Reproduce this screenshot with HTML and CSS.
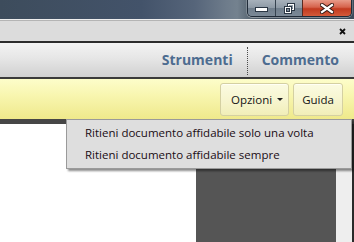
FILE: index.html
```html
<!DOCTYPE html>
<html>
<head>
<meta charset="utf-8">
<link rel="stylesheet" href="styles.css">
</head>
<body>
<div class="window">
  <div class="titlebar">
    <div class="caption">
      <div class="cb cb-min">
        <svg width="13" height="5" viewBox="0 0 13 5"><rect x="0.5" y="0.5" width="12" height="4" fill="#fff" stroke="#2a3644"/></svg>
      </div>
      <div class="cb cb-max">
        <svg width="11" height="11" viewBox="0 0 11 11">
          <rect x="3.5" y="0.5" width="7" height="7" fill="none" stroke="#2a3644"/>
          <rect x="4.5" y="1.5" width="5" height="5" fill="none" stroke="#fff"/>
          <rect x="0.5" y="3.5" width="7" height="7" fill="#7d8a97" stroke="#2a3644"/>
          <rect x="1.5" y="4.5" width="5" height="5" fill="none" stroke="#fff"/>
          <rect x="2.5" y="5.5" width="3" height="3" fill="none" stroke="#2a3644"/>
        </svg>
      </div>
      <div class="cb cb-close">
        <svg width="14" height="11" viewBox="0 0 14 11">
          <path d="M2 2 L12 9 M12 2 L2 9" stroke="#3a1a14" stroke-width="4.2" stroke-linecap="square"/>
          <path d="M2 2 L12 9 M12 2 L2 9" stroke="#fff" stroke-width="2.2" stroke-linecap="square"/>
        </svg>
      </div>
    </div>
  </div>
  <div class="tabstrip">
    <svg class="tab-close" width="7" height="7" viewBox="0 0 7 7"><path d="M1 1 L6 6 M6 1 L1 6" stroke="#111" stroke-width="1.8"/></svg>
  </div>
  <div class="toolbar">
    <span class="tb-link">Strumenti</span>
    <span class="tb-sep"></span>
    <span class="tb-link">Commento</span>
  </div>
  <div class="infobar">
    <div class="ib-btn ib-opts">Opzioni <span class="caret"></span></div>
    <div class="ib-btn ib-help">Guida</div>
  </div>
  <div class="content">
    <div class="page"></div>
    <div class="sidepanel"></div>
    <div class="scroll"></div>
    <div class="edge"></div>
  </div>
  <div class="menu">
    <div class="menu-item">Ritieni documento affidabile solo una volta</div>
    <div class="menu-item">Ritieni documento affidabile sempre</div>
  </div>
</div>
</body>
</html>
```
FILE: styles.css
```css
html, body {
  margin: 0;
  padding: 0;
}
body {
  width: 354px;
  height: 242px;
  overflow: hidden;
  font-family: "Open Sans", "Noto Sans", sans-serif;
}
.window {
  position: relative;
  width: 354px;
  height: 242px;
  display: flex;
  flex-direction: column;
}
.titlebar {
  height: 19px;
  flex: none;
  display: flex;
  justify-content: flex-end;
  align-items: flex-start;
  background-color: #425163;
  background: linear-gradient(90deg, #3d4c5c 0%, #43536a 40%, #56657a 55%, #6e7c8b 64%, #74828f 67%, #55636f 71%, #3f4d5c 76%, #3c4a59 100%);
}
.caption {
  margin-right: 2px;
  height: 17px;
  box-sizing: border-box;
  display: flex;
  border: 1px solid #202b38;
  border-top: none;
  border-radius: 0 0 5px 5px;
  overflow: hidden;
  box-shadow: 0 1px 0 rgba(255,255,255,0.35), -1px 0 0 rgba(255,255,255,0.2), 1px 0 0 rgba(255,255,255,0.2);
}
.cb {
  display: flex;
  align-items: center;
  justify-content: center;
  height: 16px;
}
.cb-min {
  width: 28px;
  background: linear-gradient(180deg, #a7b1bb 0%, #8d99a5 50%, #707e8c 51%, #7b8997 100%);
  border-right: 1px solid #36424f;
  padding-top: 2px;
  box-sizing: border-box;
}
.cb-max {
  width: 27px;
  background: linear-gradient(180deg, #a7b1bb 0%, #8d99a5 50%, #707e8c 51%, #7b8997 100%);
  border-right: 1px solid #5a2a20;
  box-sizing: border-box;
}
.cb-close {
  width: 48px;
  background: linear-gradient(180deg, #e89a88 0%, #d6634c 45%, #c23a1f 55%, #d35a3a 100%);
}
.tabstrip {
  height: 22px;
  flex: none;
  box-sizing: border-box;
  border-top: 1px solid #eeeeee;
  box-shadow: inset 0 1px 0 #b4b4b4;
  background: #dcdcdc;
  display: flex;
  justify-content: flex-end;
  align-items: center;
  padding: 1px 8px 0 0;
}
.tab-close {
  display: block;
}
.toolbar {
  height: 38px;
  flex: none;
  box-sizing: border-box;
  border-top: 2px solid #2c2c2c;
  border-bottom: 2px solid #3a3a3a;
  background: linear-gradient(180deg, #f3f3f3 0%, #e6e6e6 45%, #d0d0d0 100%);
  display: flex;
  justify-content: flex-end;
  align-items: center;
  gap: 14px;
  padding-right: 15px;
}
.tb-link {
  font-weight: 700;
  font-size: 14px;
  color: #4d6c90;
  padding-bottom: 2px;
}
.tb-sep {
  align-self: stretch;
  margin: 4px 0 2px;
  border-left: 1px dotted #4a4a4a;
}
.infobar {
  height: 40px;
  flex: none;
  box-sizing: border-box;
  background: linear-gradient(180deg, #fdfdca 0%, #f8f6b0 40%, #efe98b 100%);
  display: flex;
  justify-content: flex-end;
  align-items: flex-start;
  gap: 4px;
  padding: 4px 11px 0 0;
}
.ib-btn {
  height: 33px;
  box-sizing: border-box;
  border: 1px solid #d4d0a2;
  border-radius: 3px;
  box-shadow: inset 0 1px 0 #fffff4;
  background: linear-gradient(180deg, #fbfbe2 0%, #f6f4cc 60%, #f1eeb8 100%);
  display: flex;
  align-items: center;
  font-size: 11.5px;
  color: #141414;
  padding-bottom: 1px;
}
.ib-opts {
  width: 69px;
  padding-left: 10px;
}
.ib-help {
  width: 50px;
  justify-content: center;
}
.caret {
  width: 0;
  height: 0;
  border-left: 3px solid transparent;
  border-right: 3px solid transparent;
  border-top: 3px solid #222;
  margin-left: 5px;
  margin-top: 1px;
}
.content {
  flex: 1;
  display: flex;
  border-top: 5px solid #464646;
}
.page {
  width: 196px;
  background: #ffffff;
}
.sidepanel {
  width: 140px;
  background: #555555;
}
.scroll {
  width: 16px;
  background: #eeeeee;
}
.edge {
  width: 2px;
  background: #2a2a2a;
}
.menu {
  position: absolute;
  left: 66px;
  top: 119px;
  width: 286px;
  box-sizing: border-box;
  border: 1px solid #9a9a9a;
  background: #dedede;
  padding: 2px 0 2px;
  box-shadow: 2px 2px 2px rgba(0,0,0,0.45);
}
.menu-item {
  height: 22px;
  line-height: 22px;
  padding-left: 18px;
  font-size: 11.5px;
  color: #1a0c14;
  white-space: nowrap;
}
```
